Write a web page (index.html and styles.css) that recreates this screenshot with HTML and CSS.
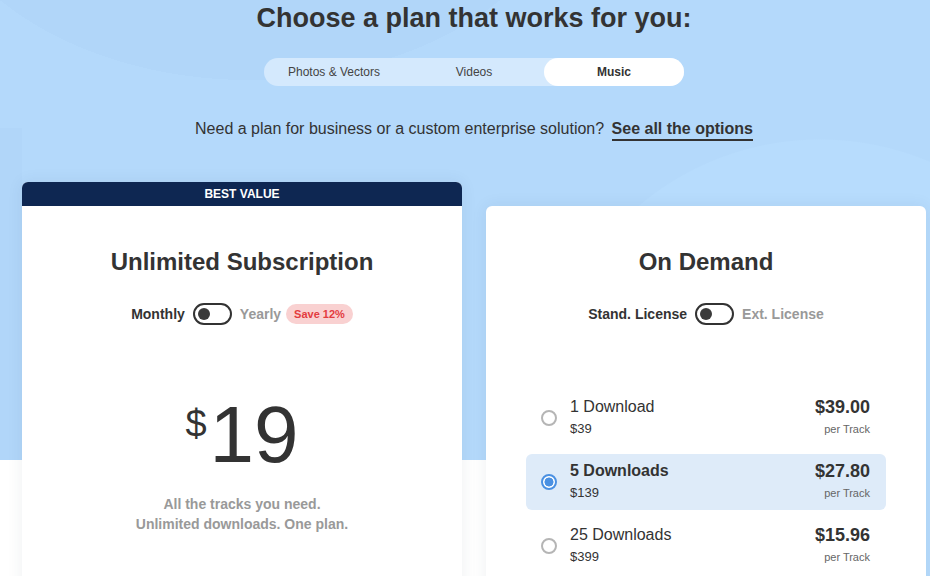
FILE: index.html
```html
<!DOCTYPE html>
<html lang="en">
<head>
<meta charset="utf-8">
<title>Choose a plan</title>
<link rel="stylesheet" href="styles.css">
</head>
<body>
<main class="page">
  <h1 class="title">Choose a plan that works for you:</h1>
  <nav class="tabs">
    <span class="tab">Photos &amp; Vectors</span>
    <span class="tab">Videos</span>
    <span class="tab tab-active">Music</span>
  </nav>
  <p class="subtitle">Need a plan for business or a custom enterprise solution? <a class="link">See all the options</a></p>

  <section class="cards">
    <article class="card card-featured">
      <div class="card-flag">BEST VALUE</div>
      <div class="card-body">
        <h2 class="card-title">Unlimited Subscription</h2>
        <div class="switch-row">
          <span class="switch-label on">Monthly</span>
          <span class="switch"><span class="knob"></span></span>
          <span class="switch-label off">Yearly</span>
          <span class="badge">Save 12%</span>
        </div>
        <div class="price"><span class="currency">$</span><span class="amount">19</span></div>
        <p class="desc">All the tracks you need.<br>Unlimited downloads. One plan.</p>
      </div>
    </article>

    <article class="card card-plain">
      <div class="card-body">
        <h2 class="card-title">On Demand</h2>
        <div class="switch-row">
          <span class="switch-label on">Stand. License</span>
          <span class="switch"><span class="knob"></span></span>
          <span class="switch-label off">Ext. License</span>
        </div>
        <ul class="options">
          <li class="option">
            <span class="radio"></span>
            <div class="opt-main">
              <div class="opt-name">1 Download</div>
              <div class="opt-total">$39</div>
            </div>
            <div class="opt-price">
              <div class="opt-unit">$39.00</div>
              <div class="opt-per">per Track</div>
            </div>
          </li>
          <li class="option selected">
            <span class="radio"></span>
            <div class="opt-main">
              <div class="opt-name">5 Downloads</div>
              <div class="opt-total">$139</div>
            </div>
            <div class="opt-price">
              <div class="opt-unit">$27.80</div>
              <div class="opt-per">per Track</div>
            </div>
          </li>
          <li class="option">
            <span class="radio"></span>
            <div class="opt-main">
              <div class="opt-name">25 Downloads</div>
              <div class="opt-total">$399</div>
            </div>
            <div class="opt-price">
              <div class="opt-unit">$15.96</div>
              <div class="opt-per">per Track</div>
            </div>
          </li>
        </ul>
      </div>
    </article>
  </section>
</main>
</body>
</html>
```
FILE: styles.css
```css
* { box-sizing: border-box; }
html, body { margin: 0; padding: 0; }
body {
  font-family: "Liberation Sans", Arial, sans-serif;
  color: #333;
  overflow: hidden;
  height: 576px;
  background:
    radial-gradient(circle at 820px 420px, #b7dcfd 0 280px, transparent 281px),
    radial-gradient(ellipse 330px 230px at 250px -150px, #b1d6f9 0 100%, transparent 100%),
    linear-gradient(to right, #b1d6f9 0 22px, transparent 22px) 0 128px / 100% 332px no-repeat,
    linear-gradient(to bottom, #b4d9fb 0 460px, #ffffff 460px);
}
.page {
  width: 904px;
  margin-left: 22px;
  display: flex;
  flex-direction: column;
  align-items: center;
}
.title {
  margin: 0;
  font-size: 27px;
  line-height: 36px;
  font-weight: bold;
  color: #333;
}
.tabs {
  margin-top: 22px;
  display: flex;
  width: 420px;
  height: 28px;
  background: #d4e9fd;
  border-radius: 14px;
}
.tab {
  flex: 1;
  display: flex;
  align-items: center;
  justify-content: center;
  font-size: 12px;
  color: #444;
  border-radius: 14px;
}
.tab-active {
  background: #fff;
  font-weight: bold;
  color: #333;
}
.subtitle {
  margin: 31px 0 0;
  font-size: 16px;
  line-height: 24px;
  color: #333;
}
.link {
  margin-left: 3px;
  font-weight: bold;
  padding-bottom: 2px;
  border-bottom: 2px solid #333;
}
.cards {
  margin-top: 41px;
  width: 100%;
  display: flex;
  gap: 24px;
  align-items: flex-start;
}
.card {
  flex: 1;
  background: #fff;
  border-radius: 6px;
  box-shadow: 0 0 16px rgba(40, 60, 90, 0.08);
  overflow: hidden;
}
.card-plain { margin-top: 24px; }
.card-flag {
  height: 24px;
  background: #0e2752;
  color: #fff;
  font-size: 12px;
  font-weight: bold;
  display: flex;
  align-items: center;
  justify-content: center;
}
.card-body {
  padding: 40px 40px 0;
  height: 400px;
  display: flex;
  flex-direction: column;
  align-items: center;
}
.card-title {
  margin: 0;
  font-size: 24px;
  line-height: 32px;
  font-weight: bold;
  color: #333;
}
.switch-row {
  margin-top: 25px;
  height: 22px;
  display: flex;
  align-items: center;
  gap: 8px;
}
.switch-label {
  font-size: 14px;
  font-weight: bold;
}
.switch-label.on { color: #333; }
.switch-label.off { color: #999; }
.switch {
  width: 39px;
  height: 22px;
  border: 2.5px solid #333;
  border-radius: 11px;
  display: flex;
  align-items: center;
  padding-left: 3px;
}
.knob {
  width: 12px;
  height: 12px;
  border-radius: 50%;
  background: #3a3a3a;
}
.badge {
  margin-left: -3px;
  height: 20px;
  padding: 0 8px;
  border-radius: 10px;
  background: #f9d1d1;
  color: #e33c3f;
  font-size: 11px;
  font-weight: bold;
  display: flex;
  align-items: center;
}
.price {
  margin-top: 70px;
  display: flex;
  align-items: flex-start;
  color: #333;
  line-height: 80px;
}
.currency {
  font-size: 38px;
  line-height: 38px;
  margin-top: 10px;
  margin-right: 3px;
}
.amount {
  font-size: 80px;
}
.desc {
  margin: 19px 0 0;
  text-align: center;
  font-size: 14px;
  line-height: 20px;
  font-weight: bold;
  color: #999;
}
.options {
  list-style: none;
  margin: 65px 0 0;
  padding: 0;
  width: 100%;
  display: flex;
  flex-direction: column;
  gap: 8px;
}
.option {
  height: 56px;
  padding: 7px 16px 7px 15px;
  display: flex;
  align-items: center;
  border-radius: 6px;
}
.option.selected { background: #deebf9; }
.radio {
  width: 16px;
  height: 16px;
  border-radius: 50%;
  border: 2px solid #b5b5b5;
  background: #fff;
  margin-right: 13px;
  flex: none;
}
.selected .radio {
  border-color: #4a90e2;
  background: radial-gradient(circle, #4a90e2 0 4.2px, #fff 4.8px);
}
.opt-main { flex: 1; }
.opt-name {
  font-size: 16px;
  line-height: 20px;
  color: #333;
}
.selected .opt-name { font-weight: bold; }
.opt-total, .opt-per {
  margin-top: 2px;
  line-height: 20px;
}
.opt-total { font-size: 13px; color: #333; }
.opt-price { text-align: right; }
.opt-unit {
  font-size: 18px;
  line-height: 20px;
  font-weight: bold;
  color: #333;
}
.opt-per { font-size: 11px; color: #666; }
```
